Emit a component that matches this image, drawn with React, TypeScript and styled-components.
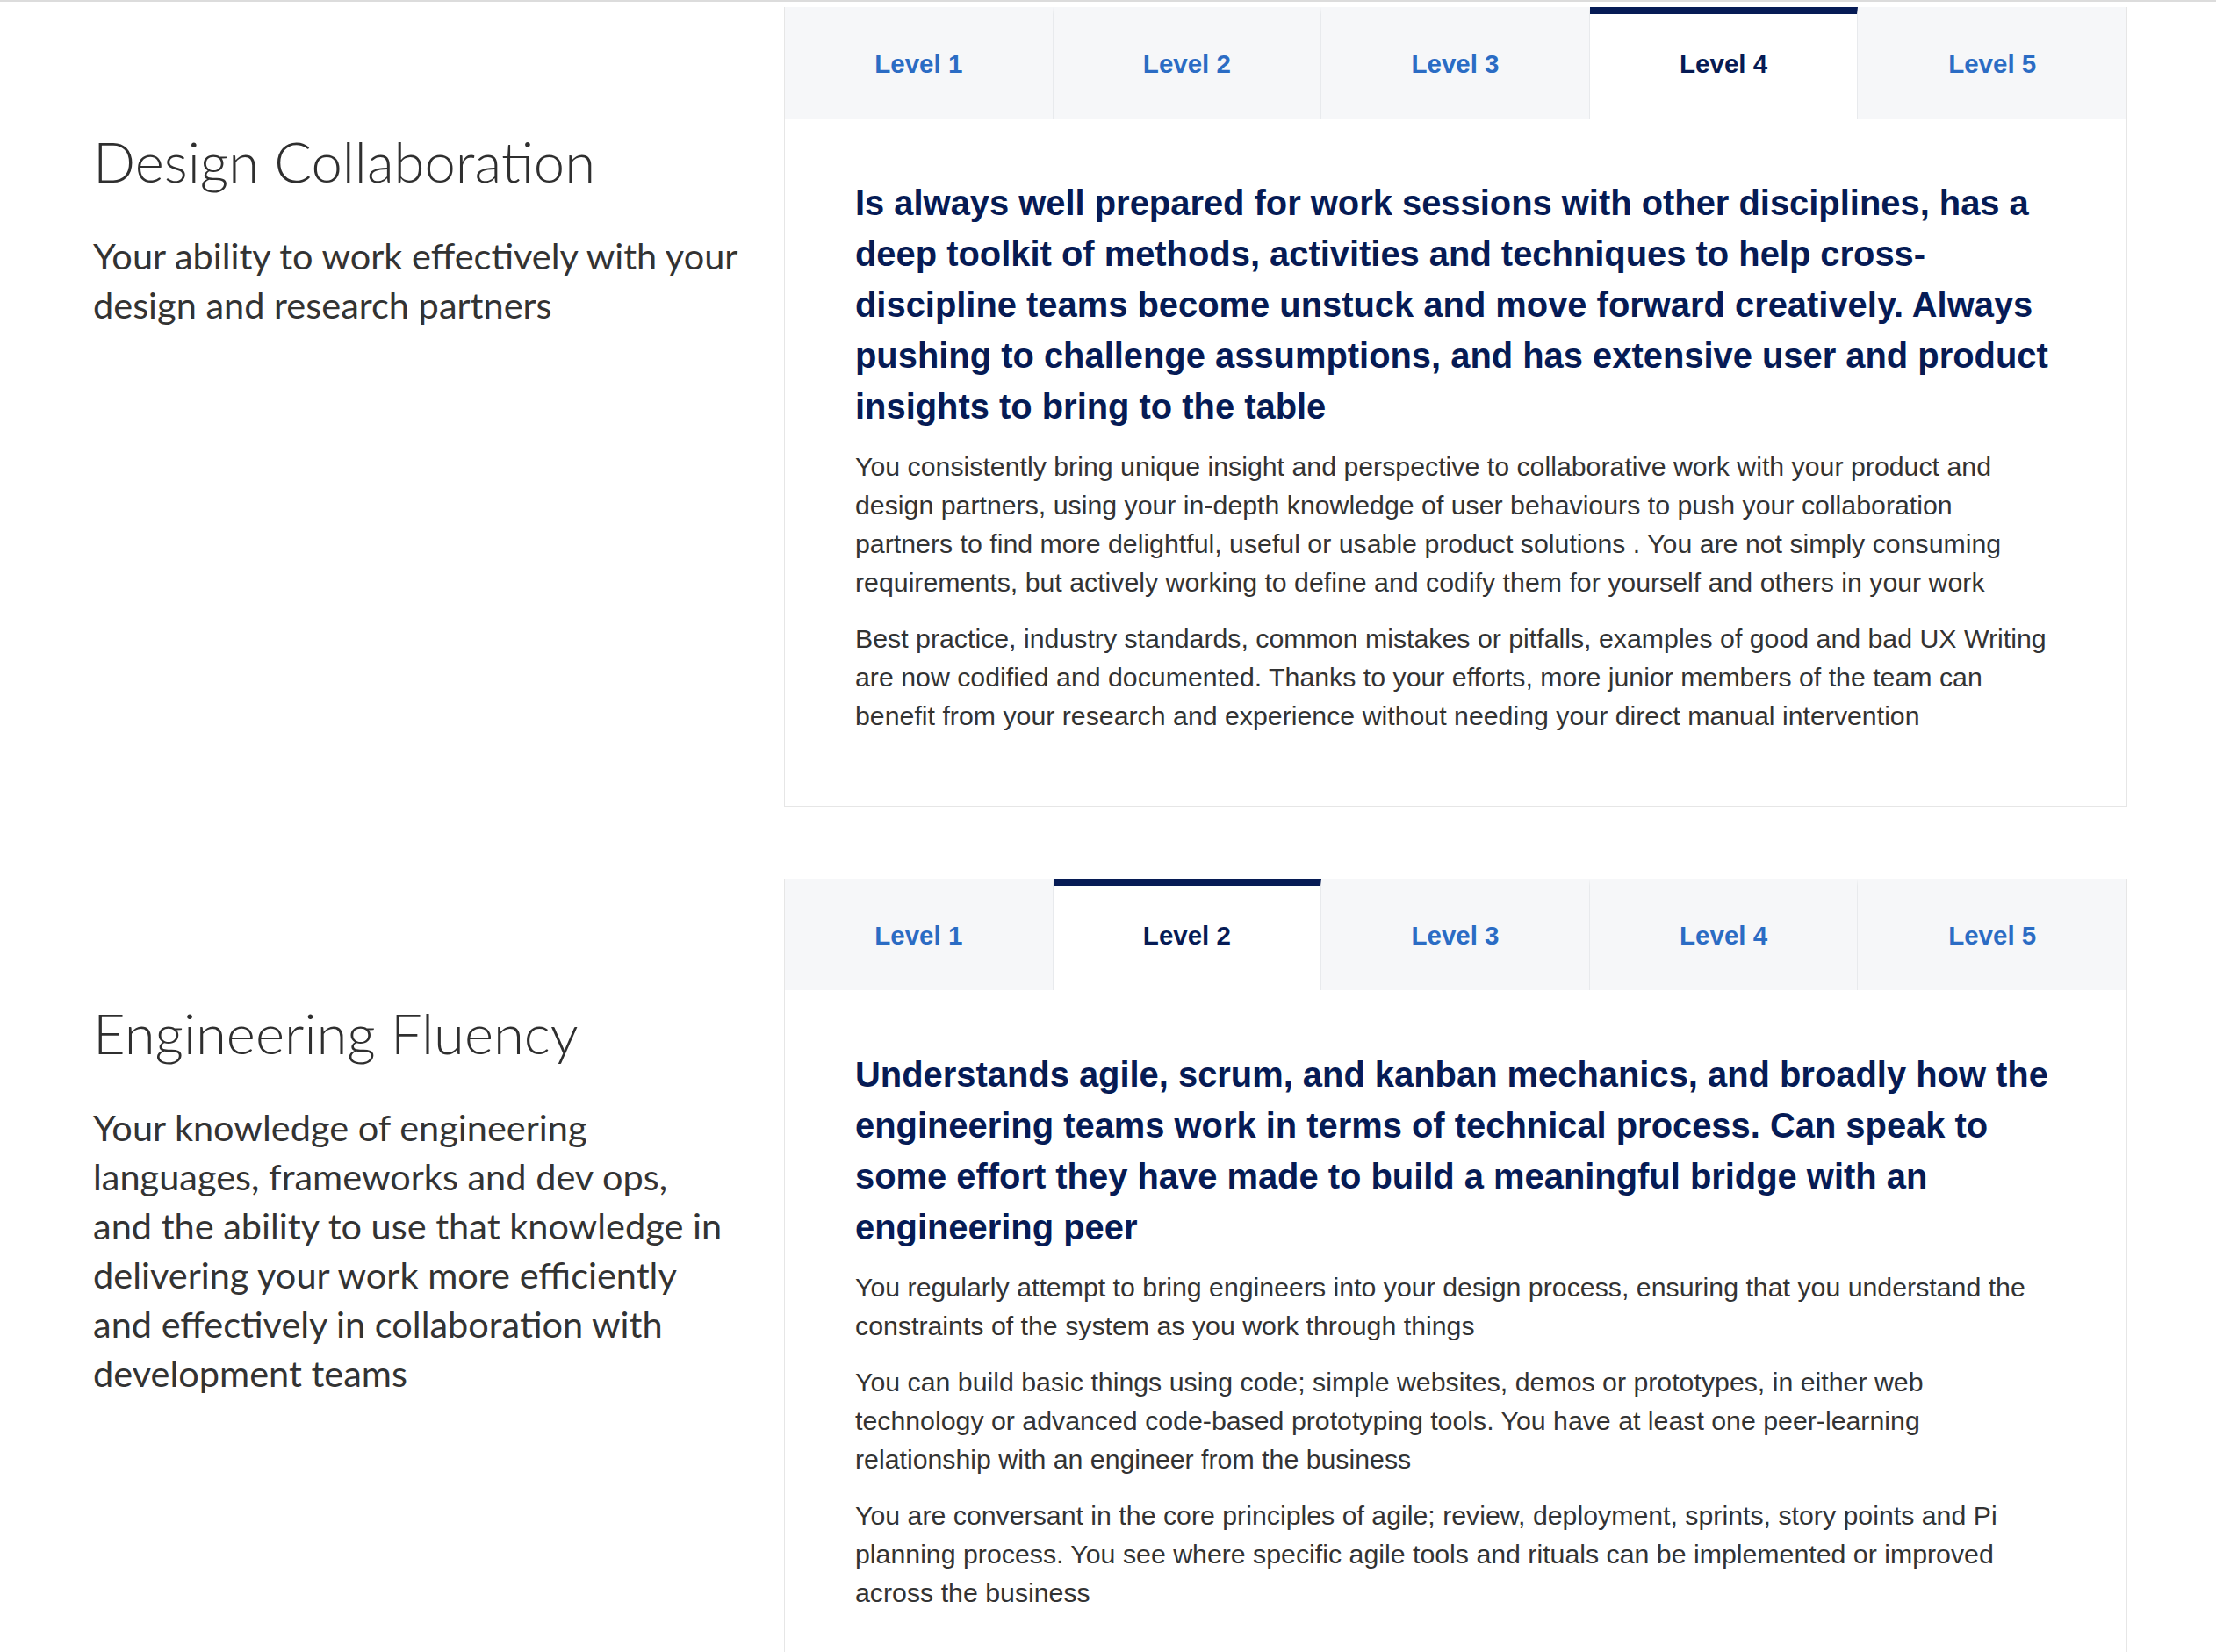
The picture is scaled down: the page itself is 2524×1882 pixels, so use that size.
import React from "react";
import styled, { createGlobalStyle } from "styled-components";

const GlobalStyle = createGlobalStyle`
  html, body {
    margin: 0;
    padding: 0;
    background: #ffffff;
  }
  * { box-sizing: border-box; }
`;

const Page = styled.main`
  border-top: 2px solid #dcdcdc;
  padding-top: 6px;
  min-height: 1882px;
`;

const Section = styled.section`
  display: grid;
  grid-template-columns: 787px 1530px;
  padding-left: 106px;
  margin-bottom: 82px;
`;

const Intro = styled.div`
  padding-top: 138px;
`;

const Title = styled.h2`
  margin: 0;
  font-family: Lato, "Liberation Sans", sans-serif;
  font-weight: 300;
  font-size: 63.4px;
  line-height: 76px;
  color: #2f2f2f;
`;

const Description = styled.p`
  margin: 41px 0 0;
  max-width: 760px;
  font-family: Lato, "Liberation Sans", sans-serif;
  font-weight: 400;
  font-size: 41.5px;
  line-height: 56px;
  color: #333333;
`;

const DescriptionLine = styled.span`
  display: block;
  white-space: nowrap;
`;

const Panel = styled.div`
  border: 1px solid #e6e6e6;
  background: #ffffff;
`;

const TabList = styled.div`
  display: grid;
  grid-template-columns: repeat(5, 1fr);
  height: 126px;
`;

const Tab = styled.button<{ $active: boolean }>`
  display: flex;
  align-items: center;
  justify-content: center;
  border: none;
  border-right: 1px solid #e8eaed;
  border-top: 8px solid ${(p) => (p.$active ? "#061b55" : "#f6f7f9")};
  padding: 0 0 5px;
  margin: -1px 0 0;
  background: ${(p) => (p.$active ? "#ffffff" : "#f6f7f9")};
  font-family: "Liberation Sans", Arial, Helvetica, sans-serif;
  font-weight: 700;
  font-size: 29.5px;
  color: ${(p) => (p.$active ? "#061b55" : "#2b6cc4")};
  cursor: pointer;
  &:last-child { border-right: none; }
`;

const Content = styled.div`
  padding: 67px 80px 80px;
`;

const Heading = styled.h3`
  margin: 0 0 18px;
  font-family: "Liberation Sans", Arial, Helvetica, sans-serif;
  font-weight: 700;
  font-size: 39.9px;
  line-height: 58px;
  color: #061b55;
`;

const Paragraph = styled.p`
  margin: 0;
  font-family: "Liberation Sans", Arial, Helvetica, sans-serif;
  font-weight: 400;
  font-size: 30.3px;
  line-height: 44px;
  color: #333333;
  & + & { margin-top: 20px; }
`;

type Competency = {
  title: string;
  description: string[];
  active: number;
  heading: string;
  paragraphs: string[];
};

const competencies: Competency[] = [
  {
    title: "Design Collaboration",
    description: [
      "Your ability to work effectively with your",
      "design and research partners",
    ],
    active: 4,
    heading:
      "Is always well prepared for work sessions with other disciplines, has a deep toolkit of methods, activities and techniques to help cross-discipline teams become unstuck and move forward creatively. Always pushing to challenge assumptions, and has extensive user and product insights to bring to the table",
    paragraphs: [
      "You consistently bring unique insight and perspective to collaborative work with your product and design partners, using your in-depth knowledge of user behaviours to push your collaboration partners to find more delightful, useful or usable product solutions . You are not simply consuming requirements, but actively working to define and codify them for yourself and others in your work",
      "Best practice, industry standards, common mistakes or pitfalls, examples of good and bad UX Writing are now codified and documented. Thanks to your efforts, more junior members of the team can benefit from your research and experience without needing your direct manual intervention",
    ],
  },
  {
    title: "Engineering Fluency",
    description: [
      "Your knowledge of engineering",
      "languages, frameworks and dev ops,",
      "and the ability to use that knowledge in",
      "delivering your work more efficiently",
      "and effectively in collaboration with",
      "development teams",
    ],
    active: 2,
    heading:
      "Understands agile, scrum, and kanban mechanics, and broadly how the engineering teams work in terms of technical process. Can speak to some effort they have made to build a meaningful bridge with an engineering peer",
    paragraphs: [
      "You regularly attempt to bring engineers into your design process, ensuring that you understand the constraints of the system as you work through things",
      "You can build basic things using code; simple websites, demos or prototypes, in either web technology or advanced code-based prototyping tools. You have at least one peer-learning relationship with an engineer from the business",
      "You are conversant in the core principles of agile; review, deployment, sprints, story points and Pi planning process. You see where specific agile tools and rituals can be implemented or improved across the business",
    ],
  },
];

const levels = [1, 2, 3, 4, 5];

function CompetencySection({ item }: { item: Competency }) {
  return (
    <Section>
      <Intro>
        <Title>{item.title}</Title>
        <Description>
          {item.description.map((line, i) => (
            <DescriptionLine key={i}>{line}</DescriptionLine>
          ))}
        </Description>
      </Intro>
      <Panel>
        <TabList>
          {levels.map((l) => (
            <Tab key={l} $active={l === item.active}>
              Level {l}
            </Tab>
          ))}
        </TabList>
        <Content>
          <Heading>{item.heading}</Heading>
          {item.paragraphs.map((p, i) => (
            <Paragraph key={i}>{p}</Paragraph>
          ))}
        </Content>
      </Panel>
    </Section>
  );
}

export default function App() {
  return (
    <>
      <GlobalStyle />
      <Page>
        {competencies.map((c) => (
          <CompetencySection key={c.title} item={c} />
        ))}
      </Page>
    </>
  );
}
